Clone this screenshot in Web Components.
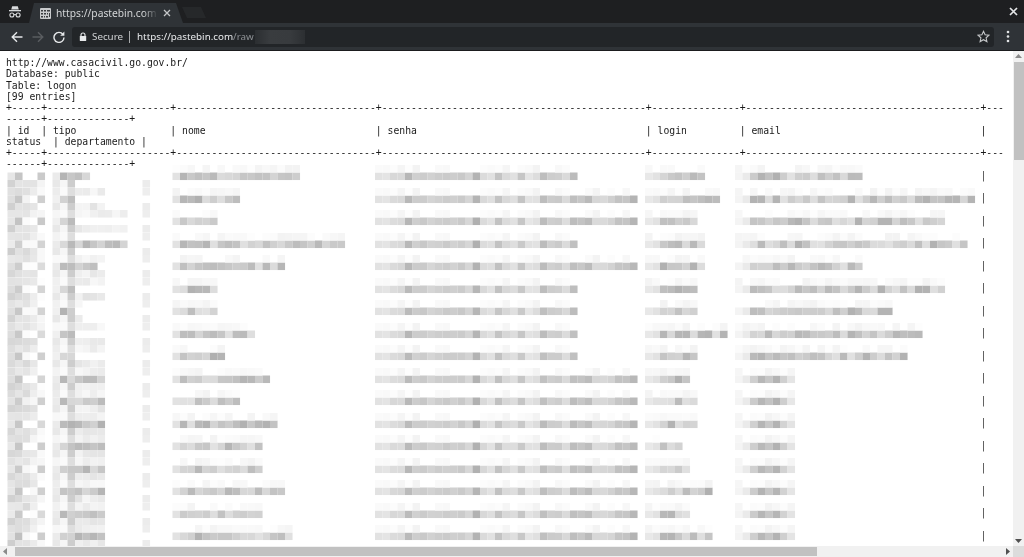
<!DOCTYPE html>
<html><head><meta charset="utf-8"><title>pastebin</title>
<style>
html,body{margin:0;padding:0;background:#fff;overflow:hidden}
body{width:1024px;height:557px;display:flex;flex-direction:column;font-family:"DejaVu Sans Mono",monospace}
</style></head><body>
<browser-chrome></browser-chrome>
<page-viewport>
<paste-text>http://www.casacivil.go.gov.br/
Database: public
Table: logon
[99 entries]
+-----+---------------------+----------------------------------+---------------------------------------------+---------------+----------------------------------------+---
------+--------------+
| id  | tipo                | nome                             | senha                                       | login         | email                                  | 
status  | departamento |
+-----+---------------------+----------------------------------+---------------------------------------------+---------------+----------------------------------------+---
------+--------------+</paste-text>
<redacted-rows></redacted-rows>
</page-viewport>
<script>
const S=(html)=>{const t=document.createElement('template');t.innerHTML=html;return t};
const tChrome=S(`<style>
:host{display:block;flex:none;height:51px;background:#1e1f21;font-family:"Noto Sans",sans-serif;color:#d8dadc;overflow:hidden}
.strip{height:23px;display:flex;align-items:flex-end}
.incog{width:29px;height:23px;display:flex;align-items:center;justify-content:center;flex:none}
.tab{width:154px;height:20px;background:#2f3337;clip-path:polygon(5px 0,147px 0,154px 100%,0 100%);display:flex;align-items:center;padding-left:11px;box-sizing:border-box;flex:none}
.fav{width:11px;height:11px;flex:none;margin-right:5px}
.title{width:104px;flex:none;white-space:nowrap;font-size:10.25px;line-height:20px;color:#d4d6d8;filter:blur(.25px);-webkit-mask-image:linear-gradient(90deg,#000 84%,transparent 98%);mask-image:linear-gradient(90deg,#000 84%,transparent 98%)}
.x{margin-left:3px;flex:none;display:flex}
.new{width:24px;height:11px;margin:0 0 5px -1px;background:#26282a;clip-path:polygon(0 0,19px 0,24px 100%,5px 100%);flex:none}
.sp{flex:1}
.close{width:22px;height:23px;display:flex;align-items:center;justify-content:center;flex:none}
.bar{height:27px;background:#2f3337;border-bottom:1px solid #1b1c1e;display:flex;align-items:center;box-sizing:content-box}
.btn{width:21px;display:flex;justify-content:center;flex:none}
.omni{flex:1;height:20px;background:#222528;border-radius:3px;display:flex;align-items:center;padding-left:7px;font-size:9.8px;margin-left:3px;min-width:0}
.omni svg{flex:none}
.sec{margin-left:5px;color:#d0d2d4;filter:blur(.25px)}
.div{width:1px;height:12px;background:#a8aaac;margin:0 7px 0 6px;flex:none}
.url{color:#e8eaec;filter:blur(.25px)}.url span{color:#8d9094}
.smear{width:50px;height:14px;margin-left:1px;flex:none;background:linear-gradient(90deg,#2b2e31,#393c3f 30%,#383b3e 70%,#2c2f32);filter:blur(.6px)}
.star{margin-left:auto;margin-right:4px;display:flex}
.menu{width:30px;padding-right:2px;box-sizing:border-box;display:flex;justify-content:center;flex:none}
</style>
<div class="strip">
 <div class="incog"><svg width="14" height="14" viewBox="0 0 14 14"><path d="M4.2 1.2h5.6l1 3.2H3.2z" fill="#d8dadc"/><rect x="1" y="5" width="12" height="1.3" fill="#d8dadc"/><circle cx="3.9" cy="10" r="2" fill="none" stroke="#d8dadc" stroke-width="1.1"/><circle cx="10.1" cy="10" r="2" fill="none" stroke="#d8dadc" stroke-width="1.1"/><path d="M5.8 9.6h2.4" stroke="#d8dadc" stroke-width="1"/></svg></div>
 <div class="tab">
  <svg class="fav" viewBox="0 0 11 11"><rect width="11" height="11" rx="1" fill="#c9cbcd"/><path d="M1 2h2v1.5H1zM4 2h2v1.5H4zM7 2h3v1.5H7zM1 5h2v1.5H1zM4 5h2v1.5H4zM7 5h1v1.5H7zM9 5h1v4H9zM1 8h2v1.5H1zM4 8h1v1.5H4zM6 8h2v1.5H6z" fill="#3a3d40"/></svg>
  <span class="title">https://pastebin.com</span>
  <span class="x"><svg width="8" height="8" viewBox="0 0 8 8"><path d="M1 1l6 6M7 1l-6 6" stroke="#c4c6c8" stroke-width="1.3"/></svg></span>
 </div>
 <div class="new"></div><div class="sp"></div>
 <div class="close"><svg width="9" height="9" viewBox="0 0 9 9"><path d="M1 1l7 7M8 1l-7 7" stroke="#e4e6e8" stroke-width="1.7"/></svg></div>
</div>
<div class="bar">
 <div class="btn" style="margin-left:6px"><svg width="12" height="12" viewBox="0 0 12 12"><path d="M11.5 6H1.5M6 1.2L1.2 6 6 10.8" fill="none" stroke="#e6e8ea" stroke-width="1.4"/></svg></div>
 <div class="btn"><svg width="12" height="12" viewBox="0 0 12 12"><path d="M.5 6h10M6 1.2L10.8 6 6 10.8" fill="none" stroke="#5a5d60" stroke-width="1.4"/></svg></div>
 <div class="btn"><svg width="12" height="12" viewBox="0 0 12 12"><path d="M10 3.4A5 5 0 1 0 11 6.5" fill="none" stroke="#e6e8ea" stroke-width="1.4"/><path d="M11.4 .6v4.2H7.2z" fill="#e6e8ea"/></svg></div>
 <div class="omni">
  <svg width="8" height="10" viewBox="0 0 8 10"><path d="M2 4.2V3a2 2 0 0 1 4 0v1.2" fill="none" stroke="#e6e8ea" stroke-width="1.1"/><rect x=".8" y="4" width="6.4" height="5" rx=".6" fill="#e6e8ea"/></svg>
  <span class="sec">Secure</span><span class="div"></span>
  <span class="url">https://pastebin.com<span>/raw</span></span><span class="smear"></span>
  <span class="star"><svg width="13" height="13" viewBox="0 0 13 13"><path d="M6.5 1.3l1.6 3.5 3.8.4-2.8 2.6.8 3.8-3.4-1.9-3.4 1.9.8-3.8L1.1 5.2l3.8-.4z" fill="none" stroke="#c4c6c8" stroke-width="1.1"/></svg></span>
 </div>
 <div class="menu"><svg width="4" height="13" viewBox="0 0 4 13"><circle cx="2" cy="2" r="1.3" fill="#e2e4e6"/><circle cx="2" cy="6.5" r="1.3" fill="#e2e4e6"/><circle cx="2" cy="11" r="1.3" fill="#e2e4e6"/></svg></div>
</div>`);
class BrowserChrome extends HTMLElement{constructor(){super();this.attachShadow({mode:'open'}).append(tChrome.content.cloneNode(true))}}
customElements.define('browser-chrome',BrowserChrome);

const tView=S(`<style>
:host{display:grid;flex:1;min-height:0;grid-template-columns:1fr 11px;grid-template-rows:1fr 11px;background:#fff}
.main{overflow:hidden;min-width:0;min-height:0;padding:6px 0 0 6px;box-sizing:border-box}
.v{background:#f1f1f1;display:flex;flex-direction:column;align-items:center}
.v .thumb{width:10px;height:98px;background:#c1c1c1;margin-top:1px}
.v .sp{flex:1}
.h{background:#f1f1f1;display:flex;align-items:center;padding-right:0}
.h .thumb{width:802px;height:9px;background:#c1c1c1;margin-left:8px}
.h .sp{flex:1}
.corner{background:#dcdcdc}
.up{height:10px;display:flex;align-items:center;justify-content:center}
svg{display:block;flex:none}
.l{margin-left:3px}.r{margin-right:3px}
</style>
<div class="main"><slot></slot></div>
<div class="v">
 <div class="up"><svg width="7" height="4" viewBox="0 0 7 4"><path d="M3.5 0L7 4H0z" fill="#8a8a8a"/></svg></div>
 <div class="thumb"></div><div class="sp"></div>
 <div class="up"><svg width="7" height="4" viewBox="0 0 7 4"><path d="M0 0h7L3.5 4z" fill="#505050"/></svg></div>
</div>
<div class="h">
 <svg class="l" width="4" height="7" viewBox="0 0 4 7"><path d="M4 0v7L0 3.5z" fill="#8a8a8a"/></svg>
 <div class="thumb"></div><div class="sp"></div>
 <svg class="r" width="4" height="7" viewBox="0 0 4 7"><path d="M0 0l4 3.5L0 7z" fill="#505050"/></svg>
</div>
<div class="corner"></div>`);
class PageViewport extends HTMLElement{constructor(){super();this.attachShadow({mode:'open'}).append(tView.content.cloneNode(true))}}
customElements.define('page-viewport',PageViewport);

const tText=S(`<style>:host{display:block;white-space:pre;font:9.75px/11.25px "DejaVu Sans Mono",monospace;color:#1a1a1a;height:112.5px;filter:blur(.3px)}</style><slot></slot>`);
class PasteText extends HTMLElement{constructor(){super();this.attachShadow({mode:'open'}).append(tText.content.cloneNode(true))}}
customElements.define('paste-text',PasteText);

function rnd(a,b){let x=Math.sin(a*127.1+b*311.7)*43758.5453;return x-Math.floor(x)}
const grey=v=>{v=Math.max(0,Math.min(255,Math.round(v)));return `rgb(${v},${v},${v})`};
const U=7.5;
class RedactedRow extends HTMLElement{
 connectedCallback(){
  const i=+this.getAttribute('i');const d=JSON.parse(this.getAttribute('d'));
  let r='';
  const cell=(x,b,v)=>{if(v<253)r+=`<rect x="${x}" y="${b*U}" width="${U+.05}" height="${U+.05}" fill="${grey(v)}"/>`};
  const idD=[228,200,250,255,210],idF=[226,226,224,238,250],idE=[212,222,224,230,250];
  for(let k=0;k<5;k++){const x=7.5+k*U;
   if(i>0)cell(x,0,idF[k]+rnd(i,k)*14-7);
   cell(x,1,idD[k]+rnd(k,i+3)*18-9);
   cell(x,2,idE[k]+rnd(i+7,k)*14-7);}
  for(let x=52.5;x<d.t[0];x+=U){const k=(x-52.5)/U;
   cell(x,1,(k==0?235:178+rnd(i,k+20)*40)+(d.t[0]<80&&k==0?5:0));}
  for(let x=52.5;x<d.t[1];x+=U){const k=(x-52.5)/U;
   cell(x,2,k==0?232:k==1?246:k==2?205:226+rnd(i,k+40)*20);
   if(i>0)cell(x,0,k==2?222:k==1?250:234+rnd(i,k+60)*16);}
  cell(142.5,2,236);if(i>0)cell(142.5,0,238);
  const col=(a,b,seed,first,fixed)=>{for(let x=a;x<b;x+=U){const k=Math.round((x-a)/U);
    const base=fixed?rnd(seed,k):rnd(seed+i*13,k);
    let v=176+base*50+(fixed?rnd(i,k)*6:0);
    if(k<first.length)v=first[k];
    cell(x,1,v);
    const f=fixed?rnd(seed+9,k):rnd(seed+i*5+3,k);
    cell(x,0,f<.22?255:240+f*14);
   }};
  col(172.5,d.n,1,[226]);
  col(375,d.s,2,[226,228],true);
  col(645,d.l,3,[232,226]);
  col(735,d.e,4,[244,234],d.e==795);
  this.shadowRoot.innerHTML=`<style>
  :host{display:block;height:22.5px}
  .w{display:grid;height:22.5px}
  svg{grid-area:1/1;display:block;overflow:visible;filter:blur(.75px)}
  .bar{grid-area:1/1;font:9.75px/11.25px "DejaVu Sans Mono",monospace;color:#444;padding:4.5px 0 0 974.4px;white-space:pre;filter:blur(.35px)}
  </style><div class="w"><svg width="1007" height="22.5" viewBox="6 0 1007 22.5">${r}</svg><span class="bar">|</span></div>`;
 }
 constructor(){super();this.attachShadow({mode:'open'})}
}
customElements.define('redacted-row',RedactedRow);
const DATA=[
[[90,75],300,577,700,862],[[75,105],240,637,720,975],[[75,127],217,637,697,945],[[127,75],345,577,705,967],
[[97,105],285,637,705,862],[[75,105],217,577,697,945],[[75,82],217,577,697,892],[[75,105],255,577,727,922],
[[75,105],225,577,697,907],[[105,105],270,637,690,795],[[105,105],240,637,697,795],[[105,105],277,637,697,795],
[[105,105],262,637,682,795],[[105,105],262,637,690,795],[[105,105],285,637,712,795],[[105,105],262,637,690,795],
[[105,105],292,637,712,795]];
class RedactedRows extends HTMLElement{constructor(){super();const s=this.attachShadow({mode:'open'});
 s.innerHTML='<style>:host{display:block;margin-top:-4.5px}</style>';
 DATA.forEach((a,i)=>{const e=document.createElement('redacted-row');e.setAttribute('i',i);e.setAttribute('d',JSON.stringify({t:a[0],n:a[1],s:a[2],l:a[3],e:a[4]}));s.append(e)});}}
customElements.define('redacted-rows',RedactedRows);
</script>
</body></html>
